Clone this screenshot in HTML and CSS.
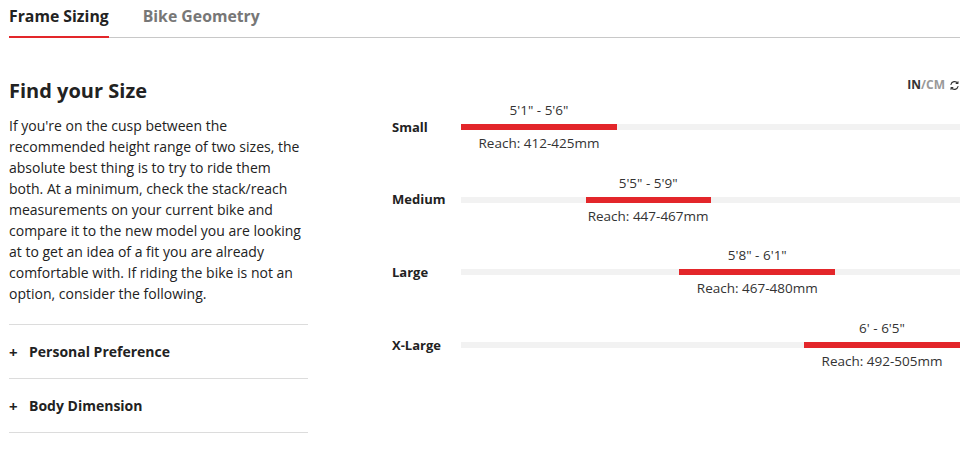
FILE: index.html
```html
<!DOCTYPE html>
<html lang="en">
<head>
<meta charset="utf-8">
<title>Frame Sizing</title>
<link rel="stylesheet" href="styles.css">
</head>
<body>
<div class="page">
  <nav class="tabs">
    <a class="tab active">Frame Sizing</a>
    <a class="tab">Bike Geometry</a>
  </nav>
  <main class="content">
    <section class="intro">
      <h2 class="title">Find your Size</h2>
      <p class="text">If you're on the cusp between the recommended height range of two sizes, the absolute best thing is to try to ride them both. At a minimum, check the stack/reach measurements on your current bike and compare it to the new model you are looking at to get an idea of a fit you are already comfortable with. If riding the bike is not an option, consider the following.</p>
      <div class="accordion">
        <div class="acc-item"><span class="plus">+</span><span>Personal Preference</span></div>
        <div class="acc-item"><span class="plus">+</span><span>Body Dimension</span></div>
      </div>
    </section>
    <section class="chart">
      <div class="units">
        <span class="u-on">IN</span><span class="u-off">/CM</span>
        <svg class="swap" width="11" height="11" viewBox="0 0 11 11" fill="none" stroke="#333" stroke-width="1.2" stroke-linecap="round" stroke-linejoin="round">
          <path d="M2 4.5 A3.6 3.6 0 0 1 8.6 3.3"/>
          <path d="M7.2 3.4 L8.8 3.5 L9 1.8"/>
          <path d="M9 6.5 A3.6 3.6 0 0 1 2.4 7.7"/>
          <path d="M3.8 7.6 L2.2 7.5 L2 9.2"/>
        </svg>
      </div>
      <div class="rows">
        <div class="row">
          <div class="size">Small</div>
          <div class="track">
            <div class="seg" style="margin-left:0%;width:31.25%">
              <div class="h">5'1" - 5'6"</div>
              <div class="bar"></div>
              <div class="reach">Reach: 412-425mm</div>
            </div>
          </div>
        </div>
        <div class="row">
          <div class="size">Medium</div>
          <div class="track">
            <div class="seg" style="margin-left:25%;width:25%">
              <div class="h">5'5" - 5'9"</div>
              <div class="bar"></div>
              <div class="reach">Reach: 447-467mm</div>
            </div>
          </div>
        </div>
        <div class="row">
          <div class="size">Large</div>
          <div class="track">
            <div class="seg" style="margin-left:43.75%;width:31.25%">
              <div class="h">5'8" - 6'1"</div>
              <div class="bar"></div>
              <div class="reach">Reach: 467-480mm</div>
            </div>
          </div>
        </div>
        <div class="row">
          <div class="size">X-Large</div>
          <div class="track">
            <div class="seg" style="margin-left:68.75%;width:31.25%">
              <div class="h">6' - 6'5"</div>
              <div class="bar"></div>
              <div class="reach">Reach: 492-505mm</div>
            </div>
          </div>
        </div>
      </div>
    </section>
  </main>
</div>
</body>
</html>
```
FILE: styles.css
```css
* { box-sizing: border-box; }
html, body { margin: 0; padding: 0; background: #fff; }
body {
  font-family: "Open Sans", "Liberation Sans", sans-serif;
  color: #222;
}
.page { padding: 0 8px 0 9px; }

.tabs {
  display: flex;
  gap: 34px;
  border-bottom: 1px solid #c8c8c8;
  height: 38px;
}
.tab {
  font-size: 15.8px;
  font-weight: 700;
  color: #777;
  line-height: 20px;
  padding-top: 6px;
  height: 38px;
}
.tab.active {
  color: #222;
  border-bottom: 2px solid #e3262a;
}

.content {
  display: grid;
  grid-template-columns: 299px 1fr;
  column-gap: 84px;
  padding-top: 40px;
}

.title {
  margin: 0;
  font-size: 20px;
  line-height: 26px;
  font-weight: 700;
}
.text {
  margin: 11px 0 0;
  font-size: 14px;
  line-height: 21px;
}
.accordion { margin-top: 20px; }
.acc-item {
  display: flex;
  align-items: center;
  height: 54px;
  border-top: 1px solid #dcdcdc;
  font-size: 14px;
  font-weight: 700;
}
.acc-item:last-child { border-bottom: 1px solid #dcdcdc; height: 55px; }
.plus { width: 20px; font-size: 15px; }

.units {
  display: flex;
  justify-content: flex-end;
  align-items: center;
  gap: 4px;
  font-size: 12px;
  font-weight: 700;
  line-height: 14px;
  height: 23px;
  align-self: start;
  padding-bottom: 9px;
}
.u-on { color: #333; }
.u-off { color: #999; margin-left: -4px; }
.swap { display: block; }

.rows {
  display: flex;
  flex-direction: column;
  gap: 21.7px;
}
.row {
  display: grid;
  grid-template-columns: 69px 1fr;
  align-items: center;
}
.size {
  font-size: 13px;
  font-weight: 700;
  line-height: 16px;
}
.track {
  background: linear-gradient(#f2f2f2, #f2f2f2) 0 23px / 100% 6px no-repeat;
}
.seg {
  display: flex;
  flex-direction: column;
  align-items: center;
}
.h, .reach {
  font-size: 13.5px;
  line-height: 18px;
  white-space: nowrap;
  color: #333;
}
.bar {
  width: 100%;
  height: 6px;
  background: #e3262a;
  margin: 5px 0 4px;
}
```
